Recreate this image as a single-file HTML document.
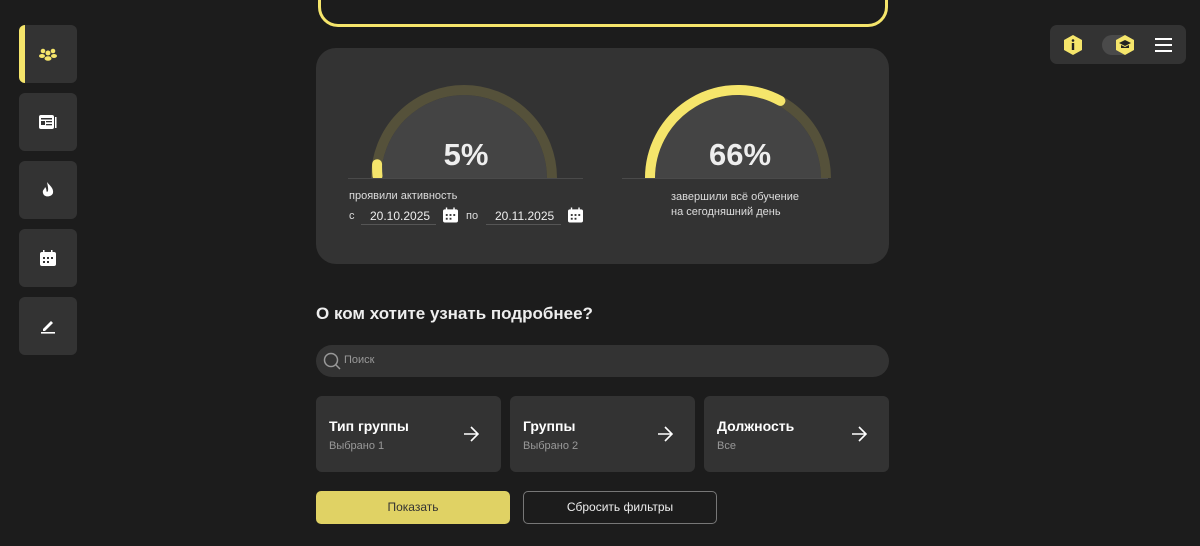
<!DOCTYPE html>
<html><head><meta charset="utf-8"><style>
*{box-sizing:border-box;margin:0;padding:0}
body{width:1200px;height:546px;background:#1c1c1c;font-family:"Liberation Sans",sans-serif;color:#eee;position:relative;overflow:hidden}
.side{position:absolute;left:19px;width:58px;height:58px;background:#333;border-radius:6px;display:flex;align-items:center;justify-content:center}
.abs{position:absolute}
.top{position:absolute;left:318px;top:-30px;width:570px;height:57px;border:3px solid #f5e56b;border-radius:20px}
.card{position:absolute;left:316px;top:48px;width:573px;height:216px;background:#333;border-radius:20px}
.f{position:absolute;top:396px;width:185px;height:76px;background:#333;border-radius:6px}
.f b{position:absolute;left:13px;top:22px;font-size:14px;color:#fff}
.f span{position:absolute;left:13px;top:44px;font-size:11px;color:#999}
.f svg{position:absolute;right:22px;top:30px}
</style></head><body>
<div class="top"></div>
<div class="side" style="top:25px;overflow:hidden"><div class="abs" style="left:0;top:0;width:6px;height:58px;background:#f5e56b"></div>
<svg width="18" height="14" viewBox="0 0 18 14" fill="#f5e56b"><circle cx="4" cy="4" r="2.3"/><circle cx="14" cy="4" r="2.3"/><circle cx="9" cy="6" r="2.5"/><ellipse cx="3" cy="9" rx="3" ry="2"/><ellipse cx="15" cy="9" rx="3" ry="2"/><ellipse cx="9" cy="11.5" rx="3.5" ry="2.3"/></svg></div>
<div class="side" style="top:93px"><svg width="18" height="14" viewBox="0 0 18 14"><rect x="0" y="0" width="15" height="14" rx="2" fill="#fff"/><rect x="2" y="3" width="11" height="1.5" fill="#333"/><rect x="2" y="6" width="4" height="4" fill="#333"/><rect x="7" y="6" width="6" height="1.3" fill="#333"/><rect x="7" y="9" width="6" height="1.3" fill="#333"/><rect x="16" y="2" width="1.5" height="11" fill="#fff"/></svg></div>
<div class="side" style="top:161px"><svg width="12" height="16" viewBox="0 0 12 16"><path d="M5 0C7 3 12 6 11 11C10 15 2 16 1 11C0 8 3 7 3 5C5 7 4 9 5 10C7 9 6 5 5 0Z" fill="#fff"/></svg></div>
<div class="side" style="top:229px"><svg width="16" height="16" viewBox="0 0 16 16"><rect x="0" y="2" width="16" height="14" rx="2" fill="#fff"/><rect x="3" y="0" width="1.5" height="4" fill="#fff"/><rect x="11" y="0" width="1.5" height="4" fill="#fff"/><g fill="#333"><rect x="3" y="7" width="2" height="2"/><rect x="7" y="7" width="2" height="2"/><rect x="11" y="7" width="2" height="2"/><rect x="3" y="11" width="2" height="2"/><rect x="7" y="11" width="2" height="2"/></g></svg></div>
<div class="side" style="top:297px"><svg width="16" height="16" viewBox="0 0 16 16"><path d="M3 11L11 3L13 5L5 13H3Z" fill="#fff"/><rect x="1" y="14" width="14" height="1.6" fill="#fff"/></svg></div>

<div class="abs" style="left:1050px;top:25px;width:136px;height:39px;background:#333;border-radius:7px"></div>
<svg class="abs" style="left:1061px;top:33px" width="24" height="24" viewBox="0 0 24 24"><path d="M12 2L21 7V17L12 22L3 17V7Z" fill="#f5e56b"/><rect x="10.8" y="10" width="2.4" height="7" fill="#222"/><circle cx="12" cy="7.5" r="1.3" fill="#222"/></svg>
<div class="abs" style="left:1102px;top:35px;width:30px;height:20px;background:#4a4a4a;border-radius:10px"></div>
<svg class="abs" style="left:1113px;top:33px" width="24" height="24" viewBox="0 0 24 24"><path d="M12 2L21 7V17L12 22L3 17V7Z" fill="#f5e56b"/><path d="M6 10L12 7L18 10L12 13Z" fill="#222"/><path d="M8 12V15H16V12L12 14Z" fill="#222"/></svg>
<div class="abs" style="left:1155px;top:38px;width:17px;height:2px;background:#fff;box-shadow:0 6px 0 #fff,0 12px 0 #fff"></div>

<div class="card"></div>
<svg class="abs" style="left:0;top:0" width="1200" height="300">
<path d="M381 178A83 83 0 0 1 547 178Z" fill="#444"/>
<path d="M376 178A88 88 0 0 1 552 178" fill="none" stroke="#55513a" stroke-width="10"/>
<path d="M377.5 176A88 88 0 0 1 377.1 164.2" fill="none" stroke="#f5e56b" stroke-width="10" stroke-linecap="round"/>
<rect x="370" y="178" width="20" height="6" fill="#333"/>
<line x1="348" y1="178.5" x2="583" y2="178.5" stroke="#4a4a4a"/>
<path d="M655 178A83 83 0 0 1 821 178Z" fill="#444"/>
<path d="M650 178A88 88 0 0 1 826 178" fill="none" stroke="#55513a" stroke-width="10"/>
<path d="M650 178A88 88 0 0 1 780.4 100.9" fill="none" stroke="#f5e56b" stroke-width="10" stroke-linecap="round"/>
<rect x="642" y="178" width="20" height="8" fill="#333"/>
<line x1="622" y1="178.5" x2="828" y2="178.5" stroke="#4a4a4a"/>
<text x="466" y="165" text-anchor="middle" font-size="31" font-weight="bold" fill="#eee" font-family="Liberation Sans">5%</text>
<text x="740" y="165" text-anchor="middle" font-size="31" font-weight="bold" fill="#eee" font-family="Liberation Sans">66%</text>
</svg>
<div class="abs" style="left:349px;top:190px;font-size:11px;color:#ddd">проявили активность</div>
<div class="abs" style="left:349px;top:210px;font-size:11px;color:#ddd">с</div>
<div class="abs" style="left:361px;top:207px;width:75px;height:18px;border-bottom:1px solid #555;font-size:12px;color:#eee;padding-left:9px;padding-top:2px">20.10.2025</div>
<div class="abs" style="left:466px;top:210px;font-size:11px;color:#ddd">по</div>
<div class="abs" style="left:486px;top:207px;width:75px;height:18px;border-bottom:1px solid #555;font-size:12px;color:#eee;padding-left:9px;padding-top:2px">20.11.2025</div>
<svg class="abs" style="left:443px;top:207px" width="15" height="16" viewBox="0 0 16 16"><rect x="0" y="2" width="16" height="14" rx="2" fill="#fff"/><rect x="3" y="0" width="1.5" height="4" fill="#fff"/><rect x="11" y="0" width="1.5" height="4" fill="#fff"/><g fill="#333"><rect x="3" y="7" width="2" height="2"/><rect x="7" y="7" width="2" height="2"/><rect x="11" y="7" width="2" height="2"/><rect x="3" y="11" width="2" height="2"/><rect x="7" y="11" width="2" height="2"/></g></svg>
<svg class="abs" style="left:568px;top:207px" width="15" height="16" viewBox="0 0 16 16"><rect x="0" y="2" width="16" height="14" rx="2" fill="#fff"/><rect x="3" y="0" width="1.5" height="4" fill="#fff"/><rect x="11" y="0" width="1.5" height="4" fill="#fff"/><g fill="#333"><rect x="3" y="7" width="2" height="2"/><rect x="7" y="7" width="2" height="2"/><rect x="11" y="7" width="2" height="2"/><rect x="3" y="11" width="2" height="2"/><rect x="7" y="11" width="2" height="2"/></g></svg>
<div class="abs" style="left:671px;top:190px;font-size:11px;color:#ddd;line-height:15px">завершили всё обучение<br>на сегодняшний день</div>

<div class="abs" style="left:316px;top:304px;font-size:17px;font-weight:bold;color:#eee">О ком хотите узнать подробнее?</div>
<div class="abs" style="left:316px;top:345px;width:573px;height:32px;background:#333;border-radius:16px"></div>
<svg class="abs" style="left:323px;top:352px" width="19" height="19" viewBox="0 0 19 19"><circle cx="8" cy="8" r="6.5" fill="none" stroke="#999" stroke-width="1.5"/><line x1="13" y1="13" x2="17" y2="17" stroke="#999" stroke-width="1.5"/></svg>
<div class="abs" style="left:344px;top:354px;font-size:11px;color:#999">Поиск</div>

<div class="f" style="left:316px"><b>Тип группы</b><span>Выбрано 1</span><svg width="16" height="16" viewBox="0 0 16 16"><path d="M1 8H15M8 1L15 8L8 15" fill="none" stroke="#fff" stroke-width="1.6"/></svg></div>
<div class="f" style="left:510px"><b>Группы</b><span>Выбрано 2</span><svg width="16" height="16" viewBox="0 0 16 16"><path d="M1 8H15M8 1L15 8L8 15" fill="none" stroke="#fff" stroke-width="1.6"/></svg></div>
<div class="f" style="left:704px"><b>Должность</b><span>Все</span><svg width="16" height="16" viewBox="0 0 16 16"><path d="M1 8H15M8 1L15 8L8 15" fill="none" stroke="#fff" stroke-width="1.6"/></svg></div>

<div class="abs" style="left:316px;top:491px;width:194px;height:33px;background:#e0d264;border-radius:5px;color:#333;font-size:12px;text-align:center;line-height:33px">Показать</div>
<div class="abs" style="left:523px;top:491px;width:194px;height:33px;border:1px solid #777;border-radius:5px;color:#eee;font-size:12px;text-align:center;line-height:31px">Сбросить фильтры</div>
</body></html>
